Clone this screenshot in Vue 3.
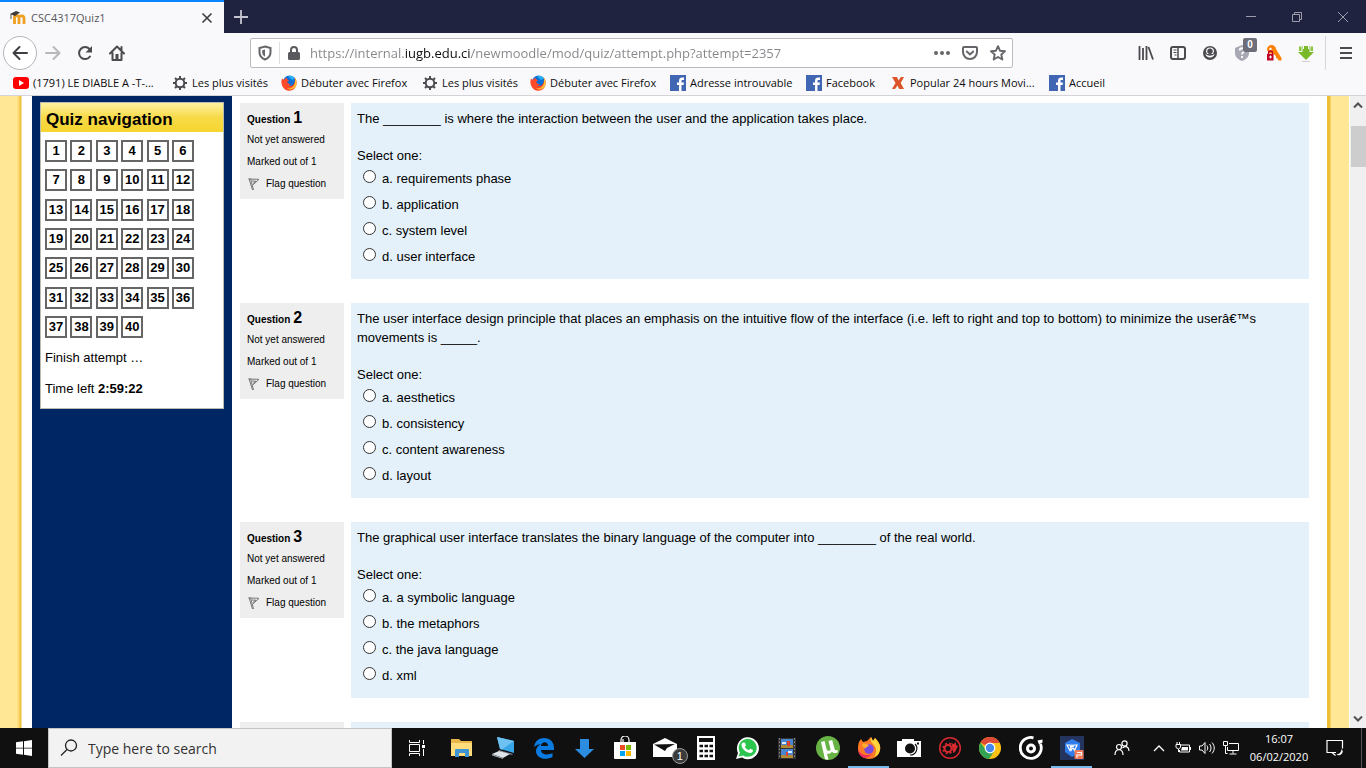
<template>
  <div class="desktop">
    <svg class="sprite" aria-hidden="true">
      <symbol id="i-youtube" viewBox="0 0 16 16">
        <rect x="0" y="2" width="16" height="12" rx="3" fill="#f00" />
        <path d="M6 5l5 3-5 3z" fill="#fff" />
      </symbol>
      <symbol id="i-gear" viewBox="0 0 16 16">
        <circle cx="8" cy="8" r="4.300" fill="none" stroke="#4a4a4f" stroke-width="2" />
        <path d="M8 1v2.500M8 12.500V15M1 8h2.500M12.500 8H15M3 3l1.800 1.800M11.200 11.200L13 13M13 3l-1.800 1.800M4.800 11.200L3 13" stroke="#4a4a4f" stroke-width="2" />
      </symbol>
      <symbol id="i-firefox" viewBox="0 0 16 16">
        <circle cx="8.500" cy="7" r="6.500" fill="#0a6fd8" />
        <path d="M7 1.500c2-1.200 5-.6 6.500 1.200l-2 2.500z" fill="#27b4f5" />
        <path d="M1 3.500C0 6 .2 9 1.500 11.500 3 14.500 6 16 8.500 15.800c4.500-.3 7.300-4 7.200-8.300-.1-2-.8-3.800-2-5 .6 2.300.3 4.500-.8 6.200C11.500 11 9 11.500 7.200 10.300c1.200.1 2.200-.4 2.900-1.200-2 .2-3.800-1-4-2.600.7-.3 1.700-.4 2-1.200C6.700 5 5.700 4 5.500 2.800 4.400 3.300 4 4 3.500 4.600 2.700 4.400 1.700 4.600 1 3.500z" fill="#ff4a2a" />
        <path d="M13.700 2.500c2.300 2.800 2.400 7 .3 9.800-2.200 2.500-6 2.800-8.500 1 4 .8 7.500-1 8.300-4.300.6-2.200.4-4.500-.1-6.500z" fill="#ffcb2d" />
      </symbol>
      <symbol id="i-facebook" viewBox="0 0 16 16">
        <rect width="16" height="16" fill="#4267b2" />
        <path d="M9 16v-6H7V7.600h2V6c0-2.400 1.300-3.400 3.300-3.400H14V5h-1.200c-1 0-1.300.4-1.300 1.200v1.400H14l-.4 2.400h-2.100v6z" fill="#fff" />
      </symbol>
      <symbol id="i-cross" viewBox="0 0 16 16">
        <path d="M2 2h5l1.500 3.500L11 2h3l-3.300 6L14 14H9.200L7.500 10.500 5 14H2l3.500-6z" fill="#dd5428" />
      </symbol>
      <symbol id="i-flag" viewBox="0 0 14 14">
        <path d="M2 1.500L5.500 13M3.500 1.500L6.500 13M1.500 2l10.500.3-6.500 6M5 4l3.800.2L6 6.500" fill="none" stroke="#777" stroke-width="1" />
      </symbol>
    </svg>

    <header class="browser">
      <div class="titlebar">
        <div class="tab">
          <svg width="16" height="16" viewBox="0 0 16 16">
            <path d="M4.500 14V7.500c0-2.500 4.500-2.500 4.500 0V14M9 8c0-3 5-3 5 .3V14" fill="none" stroke="#f0a020" stroke-width="2.800" />
            <path d="M0 4l6-3 4 1.500L5 6z" fill="#3c3c3c" />
            <path d="M1 4v5" stroke="#555" />
          </svg>
          <span class="tab-title">CSC4317Quiz1</span>
          <button class="icon-btn tab-close" type="button" aria-label="Close tab">
            <svg width="12" height="12" viewBox="0 0 12 12"><path d="M1.500 1.500l9 9M10.500 1.500l-9 9" stroke="#3c3c40" stroke-width="1.600" /></svg>
          </button>
        </div>
        <button class="icon-btn new-tab" type="button" aria-label="New tab">
          <svg width="14" height="14" viewBox="0 0 14 14"><path d="M7 0v14M0 7h14" stroke="#c5c5cf" stroke-width="1.800" /></svg>
        </button>
        <div class="window-buttons">
          <button class="icon-btn" type="button" aria-label="Minimize">
            <svg width="10" height="10" viewBox="0 0 10 10"><path d="M0 4.500h10" stroke="#9c9caa" /></svg>
          </button>
          <button class="icon-btn" type="button" aria-label="Restore">
            <svg width="10" height="10" viewBox="0 0 10 10"><path d="M.5 2.500h7v7h-7zM2.500 2.500v-2h7v7h-2" fill="none" stroke="#9c9caa" /></svg>
          </button>
          <button class="icon-btn" type="button" aria-label="Close window">
            <svg width="10" height="10" viewBox="0 0 10 10"><path d="M0 0l10 10M10 0L0 10" stroke="#9c9caa" /></svg>
          </button>
        </div>
      </div>

      <div class="toolbar">
        <div class="nav-buttons">
          <button class="icon-btn back" type="button" aria-label="Back">
            <svg width="16" height="16" viewBox="0 0 16 16"><path d="M15 8H1.500M7.500 2L1.500 8l6 6" fill="none" stroke="#3e3e43" stroke-width="2" stroke-linecap="round" stroke-linejoin="round" /></svg>
          </button>
          <button class="icon-btn" type="button" aria-label="Forward">
            <svg width="16" height="16" viewBox="0 0 16 16"><path d="M1 8h13.500M8.500 2l6 6-6 6" fill="none" stroke="#b8b8bc" stroke-width="2" stroke-linecap="round" stroke-linejoin="round" /></svg>
          </button>
          <button class="icon-btn" type="button" aria-label="Reload">
            <svg width="16" height="16" viewBox="0 0 16 16"><path d="M13 11.500A6 6 0 1 1 12.500 4" fill="none" stroke="#4a4a4f" stroke-width="2" stroke-linecap="round" /><path d="M15 1v6.500H8.500z" fill="#4a4a4f" /></svg>
          </button>
          <button class="icon-btn" type="button" aria-label="Home">
            <svg width="16" height="16" viewBox="0 0 16 16"><path d="M1 8.500l7-7 7 7M3.500 8v7h9V8M12.500 2v3" fill="none" stroke="#4a4a4f" stroke-width="2" stroke-linecap="round" stroke-linejoin="round" /><path d="M6.500 9h3v6h-3z" fill="#4a4a4f" /></svg>
          </button>
        </div>

        <div class="urlbar">
          <svg class="shield" width="14" height="16" viewBox="0 0 14 16"><path d="M7 1.500l5.500 1.500v4.500c0 3-2 5.500-5.500 7-3.500-1.500-5.500-4-5.500-7V3z" fill="none" stroke="#66666a" stroke-width="2" /><path d="M7 4.500v7.300C5 10.500 4.200 9 4.200 7.500V5.200z" fill="#66666a" /></svg>
          <span class="divider" />
          <svg class="lock" width="12" height="16" viewBox="0 0 12 16"><path d="M3 8V5a3 3 0 0 1 6 0v3" fill="none" stroke="#5a5a5e" stroke-width="2" /><rect x="0" y="7" width="12" height="8" rx="1.500" fill="#5a5a5e" /></svg>
          <input v-model="address" class="url" type="text" aria-label="Address" spellcheck="false">
          <button class="icon-btn" type="button" aria-label="Page actions">
            <svg width="16" height="16" viewBox="0 0 16 16"><circle cx="2" cy="8" r="2" fill="#66666a" /><circle cx="8" cy="8" r="2" fill="#66666a" /><circle cx="14" cy="8" r="2" fill="#66666a" /></svg>
          </button>
          <button class="icon-btn" type="button" aria-label="Save to Pocket">
            <svg width="16" height="16" viewBox="0 0 16 16"><path d="M2 2h12q1 0 1 1v4a7 7 0 0 1-14 0V3q0-1 1-1z" fill="none" stroke="#66666a" stroke-width="2" /><path d="M4.800 6.500L8 9.500l3.200-3" fill="none" stroke="#66666a" stroke-width="2" stroke-linecap="round" /></svg>
          </button>
          <button class="icon-btn" type="button" aria-label="Bookmark this page">
            <svg width="16" height="16" viewBox="0 0 16 16"><path d="M8 1.200l2 4.500 5 .5-3.700 3.300 1 5L8 12l-4.300 2.500 1-5L1 6.200l5-.5z" fill="none" stroke="#66666a" stroke-width="1.900" stroke-linejoin="round" /></svg>
          </button>
        </div>

        <div class="extensions">
          <button class="icon-btn" type="button" aria-label="Library">
            <svg width="16" height="16" viewBox="0 0 16 16"><path d="M1.500 1v14M5 3v12M8.500 1v14M10.500 2l4.500 12.500" stroke="#4a4a4f" stroke-width="1.800" /></svg>
          </button>
          <button class="icon-btn" type="button" aria-label="Sidebars">
            <svg width="16" height="16" viewBox="0 0 16 16"><rect x="1" y="2" width="14" height="12" rx="2" fill="none" stroke="#4a4a4f" stroke-width="2" /><path d="M8 2v12" stroke="#4a4a4f" stroke-width="1.500" /><path d="M3.500 5h3M3.500 7.500h3M4.500 10h2" stroke="#4a4a4f" /></svg>
          </button>
          <button class="icon-btn" type="button" aria-label="Account">
            <svg width="16" height="16" viewBox="0 0 16 16"><circle cx="8" cy="8" r="7" fill="#4a4a4f" /><path d="M4 6.500a4 4 0 0 1 8 0L11 9H5z" fill="#f9f9fb" /><circle cx="8" cy="6.300" r="2.700" fill="#4a4a4f" /><path d="M3.500 8.700c2 2.600 7 2.600 9 0-.3 5-8.700 5-9 0z" fill="#f9f9fb" /></svg>
          </button>
          <button class="icon-btn shield-ext" type="button" aria-label="Tracker blocker">
            <svg width="16" height="16" viewBox="0 0 16 16"><path d="M8 0l7 3v5c0 4-3 6.500-7 8-4-1.500-7-4-7-8V3z" fill="#a8a8b4" /><path d="M5.700 5.500c0-3 4.800-3 4.800 0C10.500 7.200 8 7.200 8 9.500M8 11v2" fill="none" stroke="#fff" stroke-width="1.800" /></svg>
            <span class="badge">0</span>
          </button>
          <button class="icon-btn" type="button" aria-label="Password manager">
            <svg width="16" height="16" viewBox="0 0 16 16"><path d="M1 5a4.500 4.500 0 0 1 9-1l5.500 9v2.500h-3l-1-2-1.500-.5v-2L7 8.500H3z" fill="#ff8208" /><circle cx="4.500" cy="4" r="1.200" fill="#fff" /><path d="M2.500 10V8a2 2 0 0 1 4 0v2" fill="none" stroke="#c00028" stroke-width="1.300" /><rect x="1" y="9" width="6.500" height="6.500" fill="#c00028" /><path d="M4.500 10.500v3M3 12h3" stroke="#fff" /></svg>
          </button>
          <button class="icon-btn downloads" type="button" aria-label="Downloads">
            <svg width="16" height="18" viewBox="0 0 16 18"><path d="M4.500 2h7v6H16l-8 8-8-8h4.500z" fill="#79b928" /><path d="M1 2.500h2.500V7H1zM12.500 2.500H15V7h-2.500z" fill="#8cc63f" /><path d="M5.500 1v4M10.500 1v4" stroke="#f9f9fb" /><path d="M4 17.500h8" stroke="#d0d0d0" /></svg>
          </button>
          <button class="icon-btn menu" type="button" aria-label="Menu">
            <svg width="12" height="12" viewBox="0 0 12 12"><path d="M0 1h12M0 6h12M0 11h12" stroke="#4a4a4f" stroke-width="2" /></svg>
          </button>
        </div>
      </div>

      <nav class="bookmarks" aria-label="Bookmarks">
        <a v-for="(mark, i) in bookmarks" :key="i" class="bookmark" href="#">
          <svg width="16" height="16"><use :href="`#i-${mark.icon}`" /></svg>
          <span>{{ mark.label }}</span>
        </a>
      </nav>
    </header>

    <div class="viewport">
      <div class="page">
        <aside class="sidebar">
          <section class="block">
            <h2 class="block-title">Quiz navigation</h2>
            <div class="block-body">
              <div class="quiz-buttons">
                <a v-for="n in 40" :key="n" class="quiz-button" href="#">{{ n }}</a>
              </div>
              <a class="finish" href="#">Finish attempt …</a>
              <div class="timer">Time left <strong>2:59:22</strong></div>
            </div>
          </section>
        </aside>

        <main class="questions">
          <section v-for="q in questions" :key="q.no" class="question">
            <div class="info">
              <h3 class="info-no">Question <span>{{ q.no }}</span></h3>
              <div>Not yet answered</div>
              <div>Marked out of 1</div>
              <a class="flag" href="#">
                <svg width="14" height="14"><use href="#i-flag" /></svg>
                Flag question
              </a>
            </div>
            <fieldset class="formulation">
              <p class="qtext">{{ q.text }}</p>
              <div class="prompt">Select one:</div>
              <div v-for="(answer, i) in q.answers" :key="answer" class="answer">
                <input :id="`q${q.no}-${i}`" v-model="q.picked" type="radio" :name="`q${q.no}`" :value="i">
                <label :for="`q${q.no}-${i}`">{{ "abcd"[i] }}. {{ answer }}</label>
              </div>
            </fieldset>
          </section>
          <section class="question">
            <div class="info" />
            <div class="formulation" />
          </section>
        </main>
      </div>

      <div class="scrollbar">
        <svg width="10" height="6" viewBox="0 0 10 6"><path d="M1 5.500l4-4 4 4" fill="none" stroke="#505050" stroke-width="2" /></svg>
        <div class="thumb" />
        <svg width="10" height="6" viewBox="0 0 10 6"><path d="M1 .5l4 4 4-4" fill="none" stroke="#505050" stroke-width="2" /></svg>
      </div>
    </div>

    <footer class="taskbar">
      <button class="icon-btn start" type="button" aria-label="Start">
        <svg width="16" height="16" viewBox="0 0 16 16"><path d="M0 2.300L7 1.300v6.400H0zM8 1.200L16 0v7.700H8zM0 8.500h7v6.300l-7-1zM8 8.500h8V16l-8-1.200z" fill="#fff" /></svg>
      </button>
      <div class="search">
        <svg width="18" height="18" viewBox="0 0 18 18"><circle cx="11" cy="6.500" r="5.500" fill="none" stroke="#222" stroke-width="1.300" /><path d="M7 10.500L1 16.500" stroke="#222" stroke-width="1.300" /></svg>
        <input type="text" placeholder="Type here to search" aria-label="Type here to search">
      </div>
      <button class="icon-btn task-view" type="button" aria-label="Task view">
        <svg width="18" height="16" viewBox="0 0 18 16"><path d="M1.500 0v2.500h10V0M1.500 16v-2.500h10V16M1.500 4.500h10v7h-10zM15.500 0v4M15.500 9v7" fill="none" stroke="#fff" /><path d="M14 5h3v3h-3z" fill="#fff" /></svg>
      </button>
      <div class="apps">
        <button class="icon-btn app" type="button" aria-label="File Explorer">
          <svg width="24" height="24" viewBox="0 0 24 24"><path d="M1 3h8l2 2h11v15H1z" fill="#e8b64a" /><path d="M1 7h21v13H1z" fill="#ffdc7c" /><path d="M5 21v-7q0-1 1-1h12q1 0 1 1v7h-4v-4H9v4z" fill="#3f95d3" /></svg>
        </button>
        <button class="icon-btn app" type="button" aria-label="This PC">
          <svg width="24" height="24" viewBox="0 0 24 24"><path d="M6 1l17 4v12L9 13z" fill="#38a5e6" /><path d="M6 1l17 4-12 8.500L9 13z" fill="#6dc2f2" /><path d="M8 14l14 4-1 1-14-4z" fill="#788089" /><path d="M1 18l7-3 11 3-7 4z" fill="#dfe4e8" /><path d="M1 18l11 4v1L1 19.500z" fill="#9aa3ab" /></svg>
        </button>
        <button class="icon-btn app" type="button" aria-label="Edge">
          <svg width="24" height="24" viewBox="0 0 24 24"><path d="M2 11C3 5 7 2 12 2c6 0 10 4 10 10v2H9c.2 5 7 5.500 11.500 3v4C13 25 4 22 4 15c0-3 2-5.500 5-7-3 .3-5 1.500-7 3zm7-1h7c0-5-6.500-5-7 0z" fill="#0a7be0" /></svg>
        </button>
        <button class="icon-btn app" type="button" aria-label="Download manager">
          <svg width="24" height="24" viewBox="0 0 24 24"><path d="M8 3h9v10h5L12.500 22 3 13h5z" fill="#2c8ce0" /></svg>
        </button>
        <button class="icon-btn app" type="button" aria-label="Store">
          <svg width="24" height="24" viewBox="0 0 24 24"><path d="M8 6V4a4 4 0 0 1 8 0v2M10 6V3" fill="none" stroke="#fff" stroke-width="1.200" /><path d="M1 6h22v16q0 1-1 1H2q-1 0-1-1z" fill="#fff" /><path d="M7 9h5v5H7z" fill="#f04e23" /><path d="M13 9h5v5h-5z" fill="#7eba00" /><path d="M7 15h5v5H7z" fill="#00a3ee" /><path d="M13 15h5v5h-5z" fill="#ffb800" /></svg>
        </button>
        <button class="icon-btn app mail" type="button" aria-label="Mail">
          <svg width="24" height="24" viewBox="0 0 24 24"><path d="M0 8l12-6 12 6v13H0z" fill="#fff" /><path d="M1 8.500L22 8l-8 4-2 3z" fill="#111" /></svg>
          <span class="mail-count">1</span>
        </button>
        <button class="icon-btn app" type="button" aria-label="Calculator">
          <svg width="24" height="24" viewBox="0 0 24 24"><path d="M3 0h18v24H3z" fill="#fff" /><path d="M5 2h14v4H5z" fill="#111" /><path d="M5.500 10h3.500M10.500 10H14M15.500 10H19M5.500 15h3.500M10.500 15H14M15.500 15H19M5.500 20h3.500M10.500 20H14M15.500 20H19" stroke="#111" stroke-width="2.500" /></svg>
        </button>
        <button class="icon-btn app" type="button" aria-label="WhatsApp">
          <svg width="24" height="24" viewBox="0 0 24 24"><path d="M1 23l2-6A11 11 0 1 1 7 21.500z" fill="#fff" /><path d="M3.500 20.500l1.500-4A9 9 0 1 1 8 19.500z" fill="#2cc64e" /><path d="M8 6.500l2 .2 1 2.800-1.200 1.300c1 1.800 2.300 2.700 4 3.500l1.500-1.600 2.700 1.300c.2 2-1.500 3-3.200 2.900C10.500 16.500 6.500 12 6.500 9c0-1 .5-2 1.500-2.500z" fill="#fff" /></svg>
        </button>
        <button class="icon-btn app" type="button" aria-label="Video player">
          <svg width="24" height="24" viewBox="0 0 24 24"><path d="M3 2h18v21H3z" fill="#343434" /><path d="M6 3h12v9H6zM6 13h12v9H6z" fill="#4a86cf" /><path d="M6 9h12v3H6zM6 19h12v3H6z" fill="#b08a35" /><path d="M12 5h3v5h-3zM11 16h2v4h-2z" fill="#df4130" /><path d="M7 6h4v2H7zM13 15h4v2h-4z" fill="#dcecf8" /><path d="M4.500 2v21M19.500 2v21" stroke="#8b8b8b" stroke-dasharray="1.500 2" /></svg>
        </button>
        <button class="icon-btn app" type="button" aria-label="Torrent client">
          <svg width="24" height="24" viewBox="0 0 24 24"><circle cx="12" cy="12" r="12" fill="#68b345" /><path d="M5 6l3.500-1 2 8c.7 2.800 4.500 2.200 3.900-.6L12.500 5l3.700-1 2.300 8.800c.4 1.500 1.500 1.700 3.300 1.300l-.3 2.300c-2.500 1-4.500.6-5.500-1-1 2-3 2.800-5 2.300l1.500 6.100-3.500-.5z" fill="#fff" /></svg>
        </button>
        <button class="icon-btn app active" type="button" aria-label="Firefox">
          <svg width="24" height="24" viewBox="0 0 24 24"><path d="M2 6l2-3 2 3 4-1 4-4 2 4 2-3c4 4 6 8 5 12-1 6-6 9-11 9S1 19 1 13c0-3 .3-5 1-7z" fill="#ff7a24" /><path d="M14 1l2 4 2-3c4 4 6 8 5 12-1 4-3 6-6 7 3-5 3-9-1-13-2-2-3-4-2-7z" fill="#ffd43b" /><path d="M1 12c1 6 7 9 14 6-2 3-6 4.500-9 3.500C3 20 1 17 1 12z" fill="#f32b62" /><circle cx="12" cy="13" r="4.800" fill="#7a4be0" /><path d="M5 8c3-1 5 0 7 1.500-1 1.500-3 1-3.500 3C6 12 5 10 5 8z" fill="#ffac31" /></svg>
        </button>
        <button class="icon-btn app" type="button" aria-label="Camera">
          <svg width="24" height="24" viewBox="0 0 24 24"><path d="M0 5h5V3h12v2h7v16H0z" fill="#fff" /><circle cx="13" cy="12.500" r="5" fill="#111" /><path d="M18 8a6.500 6.500 0 0 1-5 11" fill="none" stroke="#111" stroke-width="1.200" /><path d="M20 7.500h2" stroke="#111" stroke-width="2" /></svg>
        </button>
        <button class="icon-btn app" type="button" aria-label="Game centre">
          <svg width="24" height="24" viewBox="0 0 24 24"><circle cx="12" cy="12" r="10.300" fill="none" stroke="#d62930" stroke-width="1.500" /><circle cx="10" cy="12.500" r="3.500" fill="none" stroke="#d62930" stroke-width="2" /><circle cx="10" cy="12.500" r="5" fill="none" stroke="#d62930" stroke-width="1.500" stroke-dasharray="2 2" /><path d="M13 7l3 1 2-2v3l2 1-3 6-2 1v-5z" fill="#d62930" /></svg>
        </button>
        <button class="icon-btn app" type="button" aria-label="Chrome">
          <svg width="24" height="24" viewBox="0 0 24 24"><circle cx="12" cy="12" r="11" fill="#fbc116" /><path d="M12 12L2.500 6.500a11 11 0 0 1 19 0z" fill="#df4937" /><path d="M2.500 6.500A11 11 0 0 0 11 23l6-9H8z" fill="#32a354" /><path d="M12 7h9.800L17 14z" fill="#fbc116" /><circle cx="12" cy="12" r="5.400" fill="#fff" /><circle cx="12" cy="12" r="4.200" fill="#4587ed" /></svg>
        </button>
        <button class="icon-btn app" type="button" aria-label="Groove Music">
          <svg width="24" height="24" viewBox="0 0 24 24"><path d="M14.500 1.800A10.500 10.500 0 1 0 21.500 8" fill="none" stroke="#fff" stroke-width="2.800" /><circle cx="12" cy="12.500" r="3.500" fill="none" stroke="#fff" stroke-width="3" /><path d="M18.500 4.500l5-1v3l-3.500 2z" fill="#fff" /></svg>
        </button>
        <button class="icon-btn app active" type="button" aria-label="WPS Presentation">
          <svg width="24" height="24" viewBox="0 0 24 24"><path d="M0 0h24v24H0z" fill="#25345e" /><path d="M12 3l8 4v9l-8 5-7-5V7z" fill="#2f7cec" /><path d="M7 9h3l1.500 5L14 9h3l-2.500 5.500L12 9l-2 5.500z" fill="none" stroke="#fff" stroke-width="1.200" /><rect x="14.500" y="14" width="9" height="9" rx="1" fill="#f17b57" /><path d="M17 21.500V19h4.500v-2.500H17" fill="none" stroke="#fff" stroke-width="1.200" /></svg>
        </button>
      </div>
      <div class="tray">
        <button class="icon-btn people" type="button" aria-label="People">
          <svg width="16" height="16" viewBox="0 0 16 16"><g fill="none" stroke="#fff" stroke-width="1.200"><circle cx="10.500" cy="3.500" r="2.600" /><circle cx="5" cy="7" r="2.500" /><path d="M1 15c0-7 8-7 8 0M8.500 8c3-3 6.500-1 6.500 3" /></g></svg>
        </button>
        <button class="icon-btn" type="button" aria-label="Show hidden icons">
          <svg width="12" height="8" viewBox="0 0 12 8"><path d="M1 7l5-5 5 5" fill="none" stroke="#fff" stroke-width="1.300" /></svg>
        </button>
        <button class="icon-btn" type="button" aria-label="Battery">
          <svg width="16" height="14" viewBox="0 0 16 14"><path d="M5 4h9.500v7H4.500V9M2 1v2M4.500 1v2M1 3.500h4.500v3L3.500 8 1 6.500zM3.500 8v3" fill="none" stroke="#fff" /><path d="M7 6h6v3.500H6z" fill="#fff" /><path d="M15 6h1v3h-1z" fill="#fff" /></svg>
        </button>
        <button class="icon-btn" type="button" aria-label="Volume">
          <svg width="16" height="14" viewBox="0 0 16 14"><path d="M.5 5h2.500l3-3.500v11L3 9H.5zM8 4.500c1 1.500 1 3.500 0 5M10.500 3c2 2.500 2 5.500 0 8M13 1.500c3 3.500 3 7.500 0 11" fill="none" stroke="#fff" /></svg>
        </button>
        <button class="icon-btn" type="button" aria-label="Network">
          <svg width="16" height="14" viewBox="0 0 16 14"><path d="M6 2.500h9.500v7H4.500V6M10 9.500v3M6.500 13h7M.5.5h4v4h-4zM2.500 4.500v8h2" fill="none" stroke="#fff" /></svg>
        </button>
        <div class="clock">
          <div>16:07</div>
          <div>06/02/2020</div>
        </div>
        <button class="icon-btn action-center" type="button" aria-label="Notifications">
          <svg width="18" height="18" viewBox="0 0 18 18"><path d="M10 13.500H6L5 13.500H1V1.500h15.500v8M6 13.500l3.500 3" fill="none" stroke="#fff" stroke-width="1.200" /><path d="M15.500 10a3.500 3.500 0 1 1-5 5c3 .5 5-2 5-5z" fill="#fff" /></svg>
        </button>
      </div>
    </footer>
  </div>
</template>

<script setup>
import { ref } from "vue"

const address = ref("https://internal.iugb.edu.ci/newmoodle/mod/quiz/attempt.php?attempt=2357")

const bookmarks = [
  { icon: "youtube", label: "(1791) LE DIABLE A -T-..." },
  { icon: "gear", label: "Les plus visités" },
  { icon: "firefox", label: "Débuter avec Firefox" },
  { icon: "gear", label: "Les plus visités" },
  { icon: "firefox", label: "Débuter avec Firefox" },
  { icon: "facebook", label: "Adresse introuvable" },
  { icon: "facebook", label: "Facebook" },
  { icon: "cross", label: "Popular 24 hours Movi..." },
  { icon: "facebook", label: "Accueil" },
]

const questions = ref([
  {
    no: 1,
    text: "The ________ is where the interaction between the user and the application takes place.",
    answers: ["requirements phase", "application", "system level", "user interface"],
    picked: null,
  },
  {
    no: 2,
    text: "The user interface design principle that places an emphasis on the intuitive flow of the interface (i.e. left to right and top to bottom) to minimize the userâ€™s movements is _____.",
    answers: ["aesthetics", "consistency", "content awareness", "layout"],
    picked: null,
  },
  {
    no: 3,
    text: "The graphical user interface translates the binary language of the computer into ________ of the real world.",
    answers: ["a symbolic language", "the metaphors", "the java language", "xml"],
    picked: null,
  },
])
</script>

<style>
body {
  margin: 0;
}
</style>

<style scoped>
.desktop {
  display: flex;
  flex-direction: column;
  height: 100vh;
  overflow: hidden;
  font-family: "Open Sans", "Noto Sans", sans-serif;
  font-size: 11px;
  color: #0c0c0d;
}
.desktop * {
  box-sizing: border-box;
}
.sprite {
  position: absolute;
  width: 0;
  height: 0;
}
a {
  color: inherit;
  text-decoration: none;
}
svg {
  flex: none;
}
.icon-btn {
  display: flex;
  flex: none;
  align-items: center;
  justify-content: center;
  width: 32px;
  padding: 0;
  border: 0;
  background: none;
}

/* browser chrome */
.browser {
  flex: none;
  background: #f9f9fb;
  border-bottom: 1px solid #d4d4d8;
}
.titlebar {
  display: flex;
  height: 33px;
  background: #202340;
}
.tab {
  display: flex;
  align-items: center;
  width: 224px;
  padding-left: 10px;
  border-top: 2px solid #0a84ff;
  background: #f9f9fb;
}
.tab-title {
  flex: 1;
  margin-left: 5px;
  color: #55555a;
}
.tab-close {
  width: 34px;
}
.new-tab {
  width: 34px;
}
.window-buttons {
  display: flex;
  margin-left: auto;
}
.window-buttons .icon-btn {
  width: 46px;
}
.toolbar {
  display: flex;
  align-items: center;
  height: 40px;
}
.nav-buttons {
  display: flex;
  align-items: center;
  width: 250px;
  padding-left: 3px;
}
.back {
  width: 34px;
  height: 34px;
  border: 1px solid #b4b4b8;
  border-radius: 50%;
  background: #fff;
}
.urlbar {
  display: flex;
  flex: 1;
  align-items: center;
  height: 30px;
  padding-left: 7px;
  border: 1px solid #bbbbbe;
  border-radius: 2px;
  background: #fff;
}
.urlbar .icon-btn {
  width: 28px;
}
.divider {
  width: 1px;
  height: 22px;
  margin-left: 7px;
  background: #dededf;
}
.lock {
  margin: 0 10px 0 8px;
}
.url {
  flex: 1;
  min-width: 0;
  padding: 0;
  border: 0;
  outline: 0;
  font: 13px "Open Sans", "Noto Sans", sans-serif;
  color: #0c0c0d;
  background: linear-gradient(90deg, #85858a 94px, #0c0c0d 94px, #0c0c0d 161px, #85858a 161px);
  background-clip: text;
  -webkit-text-fill-color: transparent;
}
.extensions {
  display: flex;
  align-items: center;
  justify-content: flex-end;
  width: 353px;
}
.shield-ext {
  position: relative;
}
.badge {
  position: absolute;
  top: -7px;
  right: 1px;
  width: 14px;
  height: 14px;
  border-radius: 2px;
  background: #6e6e7a;
  color: #fff;
  font-size: 10px;
  font-weight: 700;
  line-height: 14px;
}
.menu {
  width: 41px;
  height: 34px;
  margin-left: 3px;
  border-left: 1px solid #d6d6da;
}
.bookmarks {
  display: grid;
  grid-template-columns: 159px 109px 141px 108px 140px 136px 84px 159px auto;
  align-items: start;
  height: 22px;
  padding: 2px 0 0 13px;
}
.bookmark {
  display: flex;
  align-items: center;
  gap: 4px;
  line-height: 16px;
  white-space: nowrap;
}

/* quiz page */
.viewport {
  display: flex;
  flex: 1;
  min-height: 0;
  font-family: "Liberation Sans", Arial, sans-serif;
  font-size: 13px;
  line-height: 19px;
  color: #000;
}
.page {
  display: flex;
  flex: 1;
  overflow: hidden;
  padding: 0 22px 0 32px;
  background: linear-gradient(90deg, #ffe796 17px, #edbf35 21px, #fff 22px, #fff calc(100% - 22px), #edbf35 calc(100% - 22px), #edbf35 calc(100% - 19px), #ffe796 calc(100% - 18px));
}
.sidebar {
  flex: none;
  width: 200px;
  padding: 6px 8px;
  background: #002663;
}
.block {
  border: 1px solid #b9bcae;
  background: #fff;
}
.block-title {
  height: 29px;
  margin: 0;
  padding-left: 5px;
  background: linear-gradient(#fff2a0, #f7da48 50%, #f6d52f);
  font-size: 17px;
  line-height: 33px;
}
.block-body {
  padding: 8px 4px 10px;
}
.quiz-buttons {
  display: grid;
  grid-template-columns: repeat(6, 22px);
  grid-auto-rows: 22px;
  align-content: space-between;
  justify-content: space-between;
  width: 149px;
  height: 198px;
}
.quiz-button {
  border: 2px solid #666;
  font-weight: 700;
  line-height: 18px;
  text-align: center;
}
.finish {
  display: block;
  margin-top: 10px;
}
.timer {
  margin-top: 12px;
}
.questions {
  display: flex;
  flex: 1;
  flex-direction: column;
  gap: 24px;
  padding: 7px 18px 0 8px;
}
.question {
  display: flex;
  flex: none;
  align-items: flex-start;
  gap: 7px;
}
.info {
  flex: none;
  width: 104px;
  height: 96px;
  padding: 4px 7px;
  background: #eee;
  font-size: 10px;
  line-height: 22px;
}
.info-no {
  height: 22px;
  margin: 0;
  font-size: 10px;
}
.info-no span {
  font-size: 16px;
}
.flag {
  display: flex;
  align-items: center;
  gap: 5px;
}
.formulation {
  flex: 1;
  min-width: 0;
  min-height: 176px;
  margin: 0;
  padding: 6px 6px 10px;
  border: 0;
  background: #e4f1fa;
}
.qtext {
  margin: 0 0 18px;
}
.answer {
  display: flex;
  align-items: center;
  gap: 6px;
  height: 26px;
  padding-left: 6px;
}
.answer input {
  appearance: none;
  width: 13px;
  height: 13px;
  margin: 0 0 4px;
  border: 1px solid #333;
  border-radius: 50%;
  background: #fff;
}
.answer input:checked {
  background: radial-gradient(#333 3px, #fff 4px);
}
.scrollbar {
  display: flex;
  flex-direction: column;
  align-items: center;
  width: 17px;
  padding: 6px 0;
  border-left: 1px solid #fff;
  background: #f0f0f0;
}
.thumb {
  width: 15px;
  height: 41px;
  margin: 18px 0 auto;
  background: #cdcdcd;
}

/* taskbar */
.taskbar {
  display: flex;
  flex: none;
  height: 40px;
  background: #101010;
  color: #fff;
}
.start {
  width: 48px;
}
.search {
  display: flex;
  flex: none;
  align-items: center;
  gap: 10px;
  width: 344px;
  padding-left: 11px;
  border: 1px solid #c4c4c4;
  background: #f2f2f2;
}
.search input {
  flex: 1;
  padding: 0;
  border: 0;
  outline: 0;
  background: none;
  font: 14px "Open Sans", "Noto Sans", sans-serif;
  color: #333;
}
.search input::placeholder {
  color: #333;
}
.task-view {
  width: 50px;
}
.apps {
  display: grid;
  flex: none;
  grid-template-columns: repeat(16, 1fr);
  width: 650px;
}
.app {
  width: auto;
}
.active {
  box-shadow: inset 0 -2px #76b9ed;
}
.mail {
  position: relative;
}
.mail-count {
  position: absolute;
  right: -2px;
  bottom: 4px;
  width: 16px;
  height: 16px;
  border: 1px solid #999;
  border-radius: 50%;
  background: #3b3b3b;
  color: #fff;
  font-size: 11px;
  line-height: 14px;
}
.tray {
  display: flex;
  flex: 1;
  justify-content: flex-end;
  margin-right: 4px;
  border-right: 1px solid #555;
}
.tray .icon-btn {
  width: 24px;
}
.tray .people {
  margin-right: 13px;
}
.clock {
  display: flex;
  flex-direction: column;
  justify-content: center;
  width: 72px;
  font-size: 11px;
  line-height: 18px;
  text-align: center;
}
.tray .action-center {
  width: 46px;
  padding-right: 6px;
}
</style>
